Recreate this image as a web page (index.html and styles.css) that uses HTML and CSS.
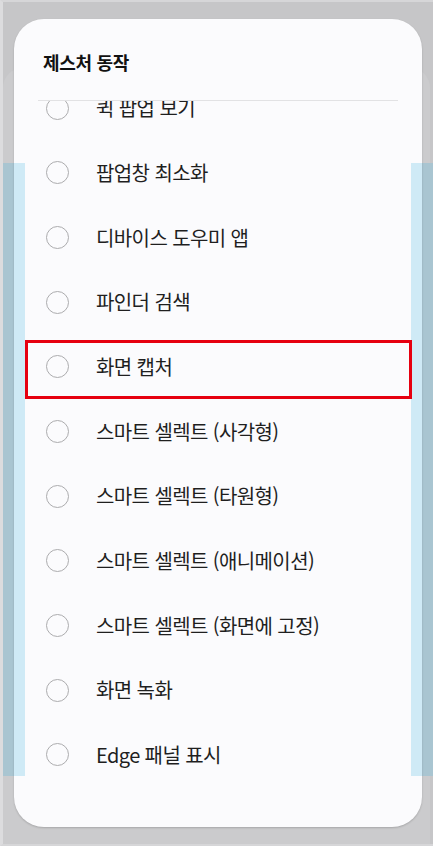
FILE: index.html
```html
<!DOCTYPE html>
<html lang="ko">
<head>
<meta charset="utf-8">
<link rel="stylesheet" href="styles.css">
</head>
<body>
<div class="stage">
  <div class="backdrop-card"></div>
  <div class="backdrop-band"></div>
  <div class="dialog">
    <div class="header">제스처 동작</div>
    <div class="divider"></div>
    <div class="list">
      <div class="items">
        <div class="item"><span class="radio"></span><span class="label">퀵 팝업 보기</span></div>
        <div class="item"><span class="radio"></span><span class="label">팝업창 최소화</span></div>
        <div class="item"><span class="radio"></span><span class="label">디바이스 도우미 앱</span></div>
        <div class="item"><span class="radio"></span><span class="label">파인더 검색</span></div>
        <div class="item"><span class="radio"></span><span class="label">화면 캡처</span></div>
        <div class="item"><span class="radio"></span><span class="label">스마트 셀렉트 (사각형)</span></div>
        <div class="item"><span class="radio"></span><span class="label">스마트 셀렉트 (타원형)</span></div>
        <div class="item"><span class="radio"></span><span class="label">스마트 셀렉트 (애니메이션)</span></div>
        <div class="item"><span class="radio"></span><span class="label">스마트 셀렉트 (화면에 고정)</span></div>
        <div class="item"><span class="radio"></span><span class="label">화면 녹화</span></div>
        <div class="item"><span class="radio"></span><span class="label">Edge 패널 표시</span></div>
      </div>
    </div>
  </div>
  <div class="strip strip-left"></div>
  <div class="strip strip-right"></div>
  <div class="highlight"></div>
</div>
</body>
</html>
```

FILE: styles.css
```css
* { box-sizing: border-box; }
html, body {
  margin: 0;
  padding: 0;
  width: 433px;
  height: 846px;
  overflow: hidden;
}
body {
  font-family: "Noto Sans CJK KR", "Noto Sans", sans-serif;
  background: #c6c6c8;
}
.stage {
  position: relative;
  width: 433px;
  height: 846px;
  padding: 17px 11px 19px 11px;
  border-left: 3px solid #dcdcde;
  border-top: 2px solid #d6d6d8;
  border-bottom: 2px solid #d6d6d8;
}
.backdrop-card {
  position: absolute;
  left: 0;
  right: 3px;
  top: 66px;
  bottom: 0;
  background: #cbcbcd;
  border-radius: 20px 20px 0 0;
}
.backdrop-band {
  position: absolute;
  left: 0;
  right: 0;
  top: 161px;
  height: 613px;
  background: #a9c5d1;
}
.dialog {
  position: relative;
  width: 408px;
  height: 808px;
  background: #fbfbfd;
  border-radius: 30px;
  box-shadow: 0 1px 2px rgba(0,0,0,0.18);
  display: flex;
  flex-direction: column;
  overflow: hidden;
}
.header {
  padding: 31px 0 0 29px;
  height: 81px;
  font-size: 18px;
  line-height: 24px;
  font-weight: 700;
  color: #111;
  letter-spacing: -0.3px;
}
.divider {
  height: 1px;
  margin: 0 24px;
  background: #e2e2e4;
}
.list {
  flex: 1;
  overflow: hidden;
}
.items {
  margin-top: -25px;
}
.item {
  height: 64.67px;
  display: flex;
  align-items: center;
  padding-left: 32px;
}
.radio {
  width: 23px;
  height: 23px;
  border: 1.7px solid #acacae;
  border-radius: 50%;
  flex: none;
}
.label {
  margin-left: 27px;
  font-size: 20px;
  line-height: 24px;
  color: #1f1f1f;
  letter-spacing: -0.6px;
}
.strip {
  position: absolute;
  top: 161px;
  height: 613px;
  width: 11px;
  background: #cfeaf6;
}
.strip-left { left: 11px; }
.strip-right { left: 408px; }
.highlight {
  position: absolute;
  left: 22px;
  top: 338px;
  width: 387px;
  height: 59px;
  border: 3px solid #e60010;
}
```
